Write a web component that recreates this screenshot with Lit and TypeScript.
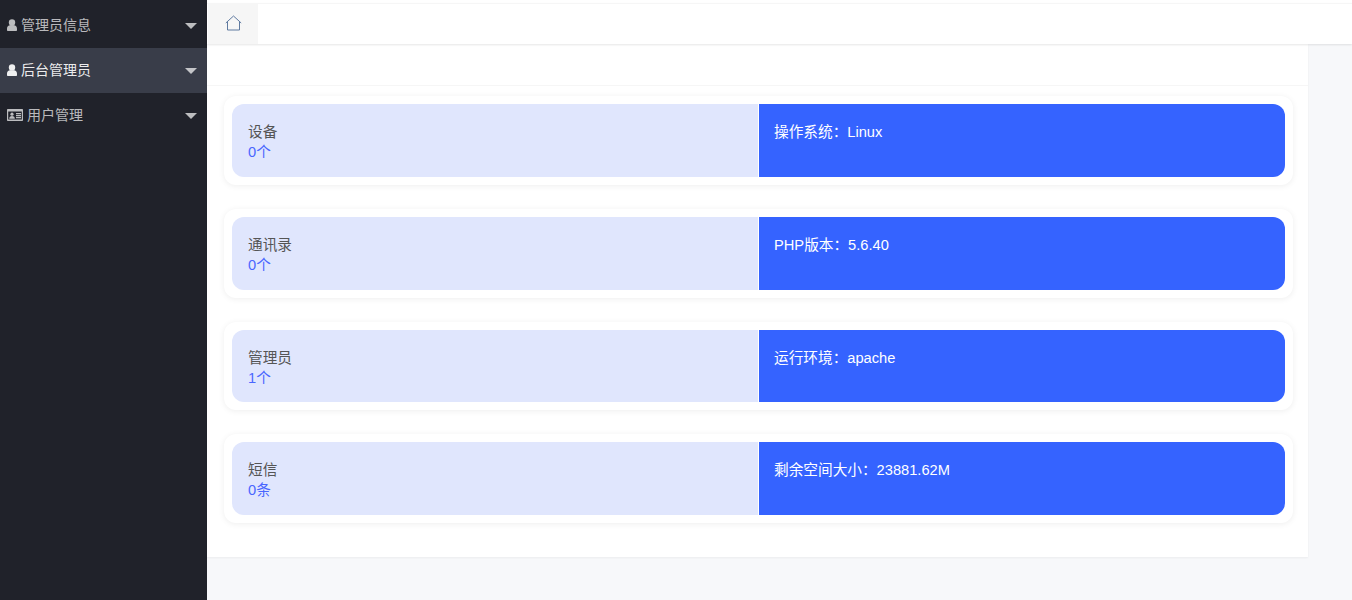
import { LitElement, html, css, svg } from "lit";
import { customElement } from "lit/decorators.js";

const userIcon = svg`<circle cx="5" cy="3.400" r="3.200" fill="currentColor"/><path d="M2.600 6.200h4.800c1.800.4 2.600 1.700 2.600 3.600v1.300c0 .7-.6 1.200-1.300 1.200H1.300C.6 12.300 0 11.800 0 11.100V9.800c0-1.900.8-3.200 2.600-3.600z" fill="currentColor"/>`;
const idIcon = svg`<path fill-rule="evenodd" d="M1 0h14c.6 0 1 .4 1 1v10c0 .6-.4 1-1 1H1c-.6 0-1-.4-1-1V1c0-.6.4-1 1-1zM1.200 2.500v8h13.600v-8z" fill="currentColor"/><circle cx="5" cy="5.200" r="1.600" fill="currentColor"/><path d="M2.200 9.800c0-1.900 1-2.700 2.800-2.700s2.800.8 2.800 2.700z" fill="currentColor"/><path d="M9 4h5v1.200H9zM9 6h5v1.200H9zM9 8h5v1.200H9z" fill="currentColor"/>`;

const menu = [
  { icon: "user", label: "管理员信息", active: false },
  { icon: "user", label: "后台管理员", active: true },
  { icon: "card", label: "用户管理", active: false },
];

const rows = [
  { name: "设备", value: "0个", info: "操作系统：Linux" },
  { name: "通讯录", value: "0个", info: "PHP版本：5.6.40" },
  { name: "管理员", value: "1个", info: "运行环境：apache" },
  { name: "短信", value: "0条", info: "剩余空间大小：23881.62M" },
];

@customElement("app-root")
export class AppRoot extends LitElement {
  static styles = css`
    :host {
      display: flex;
      width: 100%;
      height: 600px;
      overflow: hidden;
      background: #f7f8fa;
      font-family: "Liberation Sans", "Noto Sans CJK SC", sans-serif;
      font-size: 14px;
    }
    .side {
      width: 207px;
      flex: none;
      background: #20222a;
      padding-top: 3px;
      box-sizing: border-box;
    }
    .item {
      height: 45px;
      display: flex;
      align-items: center;
      padding: 0 10px 0 7px;
      color: rgba(255, 255, 255, 0.7);
    }
    .item.active {
      background: #393d49;
      color: rgba(255, 255, 255, 0.92);
    }
    .item span { margin-bottom: 2px; line-height: 20px; }
    .icon { display: block; margin: 0 4px 1px 0; flex: none; }
    .caret {
      margin-left: auto;
      width: 0;
      height: 0;
      border-left: 6px solid transparent;
      border-right: 6px solid transparent;
      border-top: 6px solid rgba(255, 255, 255, 0.7);
    }
    .main {
      flex: 1;
      min-width: 0;
      display: flex;
      flex-direction: column;
      padding-top: 3px;
      background: linear-gradient(#fff 3px, transparent 3px);
    }
    .top {
      height: 41px;
      flex: none;
      box-sizing: border-box;
      background: #fff;
      border-top: 1px solid #f6f6f6;
      box-shadow: 0 1px 2px rgba(0, 0, 0, 0.1);
      position: relative;
      display: flex;
      padding-left: 1px;
    }
    .tab {
      width: 50px;
      background: #f6f6f6;
      display: flex;
      align-items: center;
      justify-content: center;
    }
    .tab svg { display: block; margin: 0 0 3px 1px; }
    .panel {
      width: 1101px;
      height: 513px;
      flex: none;
      box-sizing: border-box;
      background: #fff;
      box-shadow: 0 1px 2px rgba(0, 0, 0, 0.05);
    }
    .head { height: 42px; box-sizing: border-box; border-bottom: 1px solid #f6f6f6; }
    .list {
      display: flex;
      flex-direction: column;
      gap: 24px;
      padding: 10.33px 15px 0 17px;
    }
    .card {
      height: 88.67px;
      box-sizing: border-box;
      padding: 8px;
      background: #fff;
      border-radius: 12px;
      box-shadow: 0 1px 6px rgba(0, 0, 0, 0.07);
      display: grid;
      grid-template-columns: 1fr 1fr;
      gap: 1px;
      font-size: 11pt;
    }
    .left, .right {
      box-sizing: border-box;
      line-height: 20px;
      padding-top: 18px;
    }
    .left {
      background: #e0e6fd;
      border-radius: 12px 0 0 12px;
      padding-left: 16px;
      color: #555;
    }
    .num { color: #4a66ff; }
    .right {
      background: #3563ff;
      border-radius: 0 12px 12px 0;
      padding-left: 15px;
      color: #fff;
    }
  `;

  render() {
    return html`
      <nav class="side">
        ${menu.map(
          (m) => html`<div class="item ${m.active ? "active" : ""}">
            ${m.icon === "user"
              ? html`<svg class="icon" width="10" height="12.300" viewBox="0 0 10 12.300">${userIcon}</svg>`
              : html`<svg class="icon" width="16" height="12" viewBox="0 0 16 12">${idIcon}</svg>`}
            <span>${m.label}</span>
            <i class="caret"></i>
          </div>`
        )}
      </nav>
      <div class="main">
        <div class="top">
          <div class="tab">
            <svg width="17" height="16" viewBox="0 0 17 16" fill="none" stroke="#5f7aa0" stroke-width="1">
              <path d="M0.800 8L8.500 1l7.700 7M2.500 6.500V15h12V6.500" />
            </svg>
          </div>
        </div>
        <div class="panel">
          <div class="head"></div>
          <div class="list">
            ${rows.map(
              (r) => html`<div class="card">
                <div class="left">
                  <div>${r.name}</div>
                  <div class="num">${r.value}</div>
                </div>
                <div class="right">${r.info}</div>
              </div>`
            )}
          </div>
        </div>
      </div>
    `;
  }
}
